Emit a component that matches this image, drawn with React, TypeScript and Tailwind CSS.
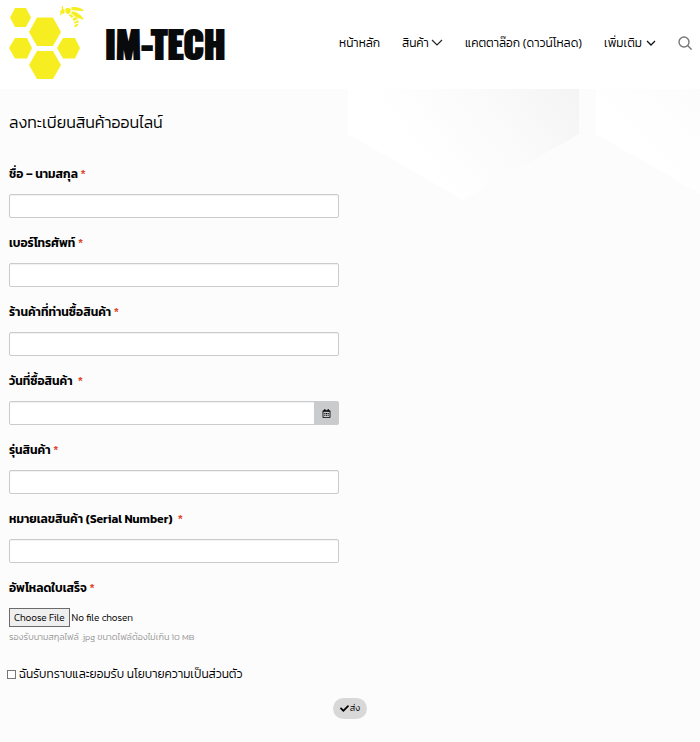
import React from 'react';
import { FaCheck, FaRegCalendarAlt } from 'react-icons/fa';

const inputCN =
  'block h-6 w-full rounded-xs border border-[#c9cbcd] bg-white px-2 text-xs shadow-[inset_0_1px_1px_rgba(0,0,0,0.06)] focus:border-gray-500 focus:outline-none';

const Logo = () => (
  <a href="#" className="flex items-center gap-5" aria-label="IM-TECH">
    <svg viewBox="0 0 76 76" className="h-[76px] w-[76px]" fill="#f7ee22">
      <path d="M6 3h11l5 9.500-5 9.500H6L1 12.500z" />
      <path d="M28 12.500h16l8 14.500-8 14H28l-8-14z" />
      <path d="M6 33h12l5 10-5 10.500H6L0 43z" />
      <path d="M54 33h12l5 10-5 10.500H54l-6-10.500z" />
      <path d="M28 46h16l8 14-8 14H28l-8-14z" />
      {/* bee: head, thorax, wings, abdomen */}
      <path d="M51 6l1.800-1-.2-3L54 .5l.2 3.500 1.600 1-.4 3-1.400 1-1.600-.2-.6 1.700-.8-.3.6-3z" />
      <path d="M56.300 3.600l3.200-.9 2.500 1.500-.6 3.500-2.600 1.500-2.300-1.800z" />
      <path d="M62 2.600c4-1.200 10-.2 13 3.300-4.500.4-9.500 0-12.500-1.300z" />
      <path d="M62.500 6.300c5 .3 10 4 12.500 8.200-5-.2-10-3.200-12.500-6z" />
      <path d="M59.500 10l2-1 3.500 2.500-2.500 1.200z" />
      <path d="M63.500 13.700l3-1.600 2.500 1.900-4.500 1.900z" />
      <path d="M65 17l4.500-1.800.3 2-4.300 1.500z" />
      <path d="M65.500 20l4-1.400-1 2.300-2.800 1.600z" />
    </svg>
    <span className="font-[Oswald,'Roboto_Condensed','Liberation_Sans',sans-serif] text-4xl font-bold text-[#080a0c] [-webkit-text-stroke:2px_#080a0c]">
      IM-TECH
    </span>
  </a>
);

const Header = () => (
  <header className="flex h-[89px] items-center justify-between bg-white pr-2 pb-1 pl-[9px]">
    <Logo />
    <nav className="flex items-center gap-[22px] text-xs whitespace-nowrap">
      <a href="#">หน้าหลัก</a>
      <a href="#" className="flex items-center gap-[2px]">
        สินค้า
        <svg viewBox="0 0 12 8" className="h-2 w-3" fill="none" stroke="#222" strokeWidth="1.2">
          <path d="M1 1l5 5 5-5" />
        </svg>
      </a>
      <a href="#">แคตตาล๊อก (ดาวน์โหลด)</a>
      <a href="#" className="flex items-center gap-1">
        เพิ่มเติม
        <svg viewBox="0 0 10 8" className="h-2 w-[10px]" fill="none" stroke="#111" strokeWidth="1.3">
          <path d="M1 2l4 4 4-4" />
        </svg>
      </a>
      <button aria-label="ค้นหา" className="cursor-pointer">
        <svg viewBox="0 0 14 14" className="h-[14px] w-[14px]" fill="none" stroke="#777" strokeWidth="1.4">
          <circle cx="6" cy="6" r="5" />
          <path d="M9.600 9.600l4 4" />
        </svg>
      </button>
    </nav>
  </header>
);

const Hexagons = () => (
  <svg viewBox="0 0 352 112" className="absolute top-0 left-[348px] h-28 w-[352px]" aria-hidden="true">
    <defs>
      <linearGradient id="shade" gradientUnits="userSpaceOnUse" x1="90" y1="90" x2="230" y2="-20">
        <stop offset="0" stopColor="#ffffff" />
        <stop offset="0.5" stopColor="#fafafa" />
        <stop offset="1" stopColor="#f3f3f3" />
      </linearGradient>
      <linearGradient id="light" gradientUnits="userSpaceOnUse" x1="290" y1="60" x2="370" y2="-20">
        <stop offset="0" stopColor="#ffffff" />
        <stop offset="1" stopColor="#fbfbfb" />
      </linearGradient>
    </defs>
    <path d="M0 0h231v45l-116 66L0 45z" fill="url(#shade)" />
    <path d="M248 0h231v45l-116 66-115-66z" fill="url(#light)" />
  </svg>
);

interface FieldProps {
  id: string;
  label: string;
  children: React.ReactNode;
}

const Field = ({ id, label, children }: FieldProps) => (
  <div className="mb-[15px]">
    <label htmlFor={id} className="mb-[10px] block h-5 text-xs leading-5 font-semibold whitespace-pre">
      {label} <span className="font-medium text-[#e04b30]">*</span>
    </label>
    {children}
  </div>
);

const App = () => (
  <div className="min-h-screen bg-[#fcfcfc] font-[Kanit,'Noto_Sans_Thai','Noto_Sans',sans-serif] font-light text-black">
    <Header />
    <main className="relative">
      <Hexagons />
      <form className="relative px-[9px] pt-[21px]" onSubmit={(e) => e.preventDefault()}>
        <h1 className="mb-[30px] text-base leading-6">ลงทะเบียนสินค้าออนไลน์</h1>
        <div className="w-[330px] max-w-full">
          <Field id="name" label="ชื่อ – นามสกุล">
            <input id="name" type="text" className={inputCN} />
          </Field>
          <Field id="phone" label="เบอร์โทรศัพท์">
            <input id="phone" type="tel" className={inputCN} />
          </Field>
          <Field id="shop" label="ร้านค้าที่ท่านซื้อสินค้า">
            <input id="shop" type="text" className={inputCN} />
          </Field>
          <Field id="date" label="วันที่ซื้อสินค้า ">
            <div className="flex">
              <input id="date" type="text" className={inputCN} />
              <button
                type="button"
                aria-label="เลือกวันที่"
                className="-ml-1 flex h-6 w-[25px] shrink-0 items-center justify-center rounded-r-xs bg-[#c9cbcd]"
              >
                <FaRegCalendarAlt size={9} />
              </button>
            </div>
          </Field>
          <Field id="model" label="รุ่นสินค้า">
            <input id="model" type="text" className={inputCN} />
          </Field>
          <Field id="serial" label="หมายเลขสินค้า (Serial Number) ">
            <input id="serial" type="text" className={inputCN} />
          </Field>
          <Field id="receipt" label="อัพโหลดใบเสร็จ">
            <input
              id="receipt"
              type="file"
              className="block h-[19px] w-full text-[10px] leading-4 file:mr-[2px] file:h-[19px] file:border file:border-solid file:border-[#6b6b6b] file:bg-[#efefef] file:px-1"
            />
            <p className="text-[9px] leading-5 text-[#999]">รองรับนามสกุลไฟล์ .jpg ขนาดไฟล์ต้องไม่เกิน 10 MB</p>
          </Field>
        </div>
        <label className="mt-[17px] -ml-[2px] flex items-center gap-[3px] text-xs leading-5">
          <input
            type="checkbox"
            className="h-[9px] w-[9px] appearance-none border border-[#767676] bg-white checked:bg-gray-700"
          />
          ฉันรับทราบและยอมรับ นโยบายความเป็นส่วนตัว
        </label>
        <div className="flex justify-center pt-[14px] pb-6">
          <button type="submit" className="flex h-[21px] items-center gap-px rounded-full bg-[#d8d8d8] px-[7px] text-[9px]">
            <FaCheck size={9} />
            ส่ง
          </button>
        </div>
      </form>
    </main>
  </div>
);

export default App;
